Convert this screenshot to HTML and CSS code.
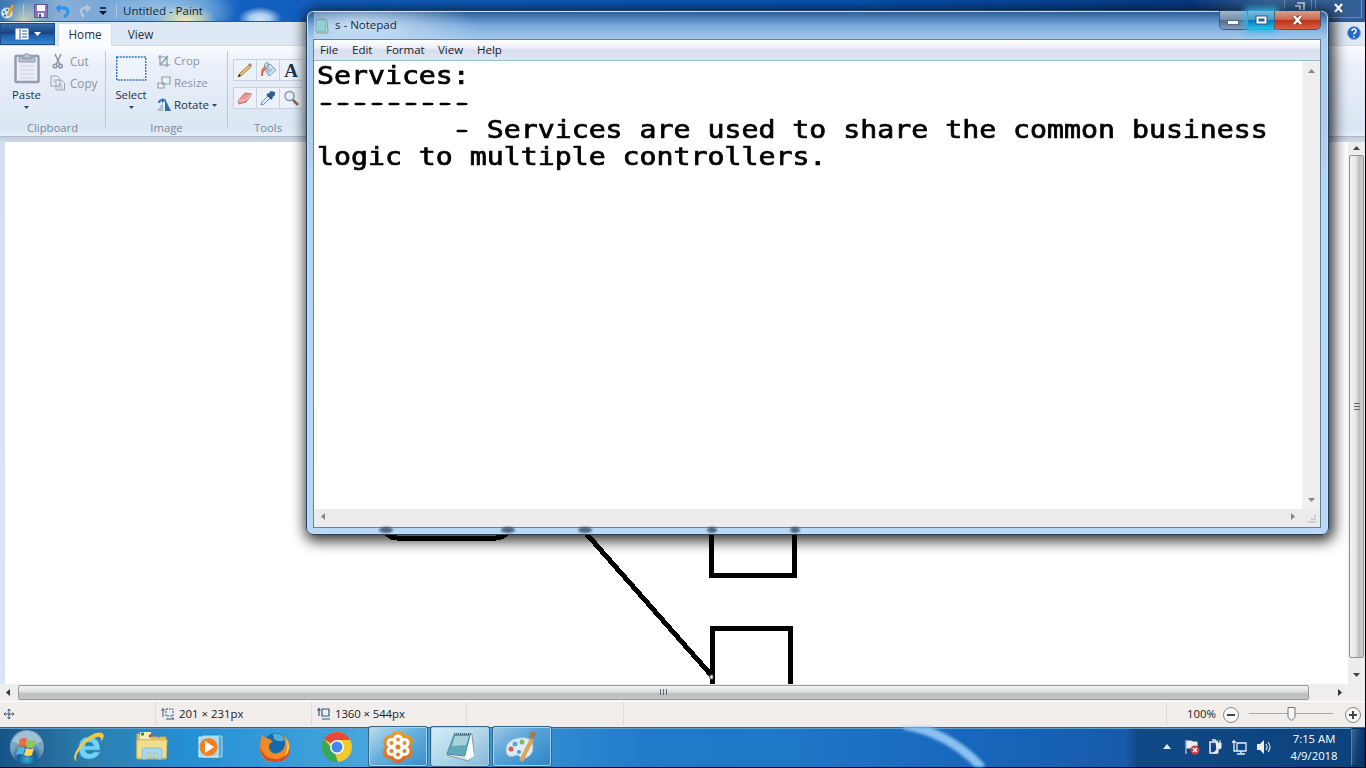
FILE: index.html
```html
<!DOCTYPE html>
<html lang="en">
<head>
<meta charset="utf-8">
<title>Untitled - Paint</title>
<link rel="stylesheet" href="styles.css">
</head>
<body>
<main class="desktop">
  <section class="paint">
    <header class="paint-title">
      <svg class="title-icon" width="16" height="18" viewBox="0 0 16 18"><ellipse cx="7" cy="11" rx="6" ry="5.500" fill="#dcebf2" stroke="#7fa3bd"/><circle cx="4" cy="10" r="1.300" fill="#3c8ed0"/><circle cx="7" cy="8" r="1.300" fill="#41a24a"/><circle cx="5" cy="13.500" r="1.200" fill="#2d73c8"/><path d="M8 14L13 3" stroke="#e49a36" stroke-width="3"/></svg>
      <i class="tsep"></i>
      <svg class="save" width="14" height="14" viewBox="0 0 14 14"><path d="M.5.5h13v13H.5z" fill="#8a76b5" stroke="#665496"/><path d="M3 1h8v6H3z" fill="#f5f5ff"/><path d="M4 9h6v4H4z" fill="#e8ebf8"/><path d="M5 10h2v3H5z" fill="#4b4b86"/></svg>
      <svg class="undo" width="15" height="14" viewBox="0 0 15 14"><path d="M3 4h6q4 0 4 4-.5 3-4 5" fill="none" stroke="#2b95ef" stroke-width="3"/><path d="M0 4l5-4v9z" fill="#2b95ef"/></svg>
      <svg class="redo" width="14" height="14" viewBox="0 0 14 14"><path d="M11 4H6Q2 5 3 8q1 3 3 5" fill="none" stroke="#b4c6d8" stroke-width="2.500"/><path d="M13 4L8 0v9z" fill="#b4c6d8"/></svg>
      <svg class="qat" width="8" height="8" viewBox="0 0 8 8"><path d="M1 1h6" stroke="#0b1526" stroke-width="1.500"/><path d="M0 4h8L4 8z" fill="#0b1526"/></svg>
      <i class="tsep tsep2"></i>
      <span class="paint-name">Untitled - Paint</span>
      <div class="paint-buttons"><i></i><i></i><i class="prestore"><svg width="11" height="10" viewBox="0 0 11 10"><path d="M3 2h7v7H8M1 5h5v4" fill="none" stroke="#dce6f1" stroke-width="1.700"/></svg></i><i class="pclose"><svg width="12" height="10" viewBox="0 0 12 10"><path d="M2 1l7 8M9 1L2 9" stroke="#344b69" stroke-width="4"/><path d="M2 1l7 8M9 1L2 9" stroke="#fff" stroke-width="2.400"/></svg></i></div>
    </header>
    <nav class="tabs">
      <div class="file-tab"><svg width="28" height="12" viewBox="0 0 28 12"><path d="M.5.5h13v11H.5z" fill="#fff"/><path d="M5 1v10M7 3h5M7 6h5M7 9h5" stroke="#31568c"/><path d="M19 4h7l-3.500 4z" fill="#fff"/></svg></div>
      <div class="home-tab">Home</div><div class="view-tab">View</div>
      <svg class="help" width="14" height="14" viewBox="0 0 14 14"><circle cx="7" cy="7" r="6.500" fill="#2466cb" stroke="#8aa9d6"/><path d="M5 5q0-2 2-2t2 2q0 1-1 1.700T7 8.500M7 10v1.500" fill="none" stroke="#fff" stroke-width="1.500"/></svg>
    </nav>
    <div class="ribbon">
      <div class="group clipboard">
        <div class="group-main">
          <div class="big paste"><svg width="26" height="32" viewBox="0 0 26 32"><rect x="1.500" y="4" width="23" height="26" rx="1" fill="#e9edf5" stroke="#939dad" stroke-width="2.500"/><path d="M5 6h16v4H5zM9 3h2q0-3 4 0h2v4H9z" fill="#bcc4d0" stroke="#9099a7"/><path d="M6 14h14M6 18h14M6 22h14M6 26h14" stroke="#ccd3df"/></svg><b>Paste</b><svg class="arrow" width="5" height="3" viewBox="0 0 5 3"><path d="M0 0h5L2.500 3z" fill="#34435a"/></svg></div>
          <div class="small-list"><div><svg width="16" height="16" viewBox="0 0 16 16"><path d="M5 1l5 11M11 1L6 12" stroke="#8c95a5" stroke-width="1.500"/><circle cx="5" cy="13" r="1.800" fill="none" stroke="#8c95a5" stroke-width="1.500"/><circle cx="10.500" cy="13" r="1.800" fill="none" stroke="#8c95a5" stroke-width="1.500"/></svg>Cut</div><div><svg width="16" height="16" viewBox="0 0 16 16"><path d="M1 1h6l3 3v7H1zM6 5h5l3.500 3v7H6z" fill="#edf1f7" stroke="#9ca5b4"/><path d="M3 5h4M3 7h2M8 9h4M8 11h5M8 13h5" stroke="#adb5c1"/></svg>Copy</div></div>
        </div><div class="caption">Clipboard</div>
      </div>
      <div class="group image">
        <div class="group-main">
          <div class="big select"><svg width="31" height="32" viewBox="0 0 31 32"><rect x=".7" y="6" width="29" height="23" fill="#edf4fc" stroke="#3973b8" stroke-width="1.400" stroke-dasharray="2 1"/></svg><b>Select</b><svg class="arrow" width="5" height="3" viewBox="0 0 5 3"><path d="M0 0h5L2.500 3z" fill="#34435a"/></svg></div>
          <div class="small-list"><div><svg width="14" height="14" viewBox="0 0 14 14"><path d="M3 1v10h10M1 3h9v10M4 10l7-8" fill="none" stroke="#8994a6" stroke-width="1.200"/></svg>Crop</div><div><svg width="14" height="14" viewBox="0 0 14 14"><path d="M5 1h8v7H5zM1 7h6v5H1z" fill="#edf1f7" stroke="#929dae" stroke-width="1.200"/></svg>Resize</div><div class="rotate"><svg width="14" height="14" viewBox="0 0 14 14"><path d="M8 1v12h6z" fill="#2a6eae"/><path d="M6 5v8H0z" fill="#a9bdcf"/><path d="M2 5q0-3 4-3" fill="none" stroke="#2673b8" stroke-width="2"/><path d="M5 0l4 2-4 3z" fill="#2673b8"/></svg>Rotate<svg width="5" height="3" viewBox="0 0 5 3"><path d="M0 0h5L2.500 3z" fill="#34435a"/></svg></div></div>
        </div><div class="caption">Image</div>
      </div>
      <div class="group tools">
        <div class="tool-grid">
          <i><svg width="18" height="18" viewBox="0 0 18 18"><path d="M2 16l2-4 9-8 2 2-9 8z" fill="#edc364" stroke="#8a6940" stroke-width=".8"/><path d="M12 4l2-2 2 2-1 2z" fill="#bb8272"/><path d="M2 16l1-3 2 2z" fill="#222"/></svg></i>
          <i><svg width="18" height="18" viewBox="0 0 18 18"><path d="M5 7l6-4 6 6-7 6z" fill="#dceaf5" stroke="#7898b6"/><path d="M9 8V2q-3-2-4 5" fill="none" stroke="#668bae"/><path d="M2 15q-1-8 4-9l3 2q-5 0-5 7z" fill="#e66e4b"/><path d="M6 8l9-1-5 6z" fill="#a2c4df"/></svg></i>
          <i class="letter">A</i>
          <i><svg width="18" height="18" viewBox="0 0 18 18"><path d="M2 12l7-8 7 1-6 8-7 2z" fill="#ed9590" stroke="#b97777"/><path d="M2 12l7-1 7-6" fill="none" stroke="#ffd1c7"/></svg></i>
          <i><svg width="18" height="18" viewBox="0 0 18 18"><path d="M2 16l1-3 7-7 2 2-7 7z" fill="#e5f2fa" stroke="#6d8ca7"/><path d="M9 5l3-3 4 1 0 3-3 3z" fill="#345f91"/><path d="M8 5l5 5" stroke="#25507f" stroke-width="2"/></svg></i>
          <i><svg width="18" height="18" viewBox="0 0 18 18"><circle cx="7.500" cy="7" r="4.500" fill="#e7f0f8" stroke="#8695a6" stroke-width="1.500"/><path d="M11 11l5 5" stroke="#85675b" stroke-width="2.500"/></svg></i>
        </div><div class="caption">Tools</div>
      </div>
    </div>
    <div class="work">
      <svg class="drawing" width="1343" height="542" viewBox="5 142 1343 542"><path d="M381 520q4 18 16 18h99q12 0 17-18M576 522L712 676M711 520v55h83v-55M712 684v-56h78v56" fill="none" stroke="#000" stroke-width="5" shape-rendering="crispEdges"/><path d="M710 675h3v4h-3z" fill="#fff" stroke="#555"/></svg>
      <div class="vbar"><svg width="7" height="4" viewBox="0 0 7 4"><path d="M0 4l3.500-4L7 4z" fill="#444"/></svg><div class="vthumb"><i></i><i></i><i></i></div><svg width="7" height="4" viewBox="0 0 7 4"><path d="M0 0h7L3.500 4z" fill="#444"/></svg></div>
    </div>
    <div class="hbar"><svg width="4" height="7" viewBox="0 0 4 7"><path d="M4 0v7L0 3.500z" fill="#333"/></svg><div class="hthumb"><i></i><i></i><i></i></div><svg width="4" height="7" viewBox="0 0 4 7"><path d="M0 0v7l4-3.500z" fill="#333"/></svg></div>
    <footer class="status">
      <div class="cell c1"><svg width="12" height="12" viewBox="0 0 12 12"><path d="M6 1v10M1 6h10M4.500 2.500L6 1l1.500 1.500M4.500 9.500L6 11l1.500-1.500M2.500 4.500L1 6l1.500 1.500M9.500 4.500L11 6 9.500 7.500" fill="none" stroke="#36516f"/></svg></div>
      <div class="cell c2"><svg width="14" height="13" viewBox="0 0 14 13"><path d="M2 2v8M.5 3.500L2 1.500l1.500 2M5 12h8M11 10.500l2 1.500" fill="none" stroke="#34577d"/><path d="M5 2h7v7H5z" fill="none" stroke="#34577d" stroke-dasharray="2 1"/></svg><span>201 × 231px</span></div>
      <div class="cell c3"><svg width="14" height="13" viewBox="0 0 14 13"><path d="M2 2v7M.5 3.500L2 1.500l1.500 2M5 12h8M5 2h7v7H5z" fill="none" stroke="#34577d" stroke-width="1.200"/></svg><span>1360 × 544px</span></div>
      <div class="cell c4"></div><div class="cell c5"></div>
      <div class="zoom"><span>100%</span><svg width="141" height="18" viewBox="0 0 141 18"><circle cx="9" cy="10" r="7.500" fill="#f9f9f9" stroke="#85888c"/><circle cx="131" cy="10" r="7.500" fill="#f9f9f9" stroke="#85888c"/><path d="M5 10h8M127 10h8M131 6v8" stroke="#444" stroke-width="2"/><path d="M27 8.500h84" stroke="#aaa"/><path d="M66 2.500h7v10l-3.500 3-3.500-3z" fill="#f8f8f8" stroke="#777"/></svg></div>
    </footer>
  </section>

  <footer class="taskbar">
    <svg class="sweep" width="1365" height="40" viewBox="0 0 1365 40"><path d="M904 -2Q950 6 982 41" fill="none" stroke="#8ac1f2" stroke-width="9"/></svg>
    <div class="task start"><svg width="38" height="38" viewBox="0 0 38 38"><defs><radialGradient id="orb" cy=".85"><stop stop-color="#39a9d9"/><stop offset=".5" stop-color="#175b91"/><stop offset="1" stop-color="#78a6c5"/></radialGradient></defs><circle cx="19" cy="19" r="17.500" fill="url(#orb)" stroke="#235a83"/><path d="M4 13q6-10 15-10t15 10q-15 8-30 0z" fill="#fff" opacity=".3"/><path d="M12 11q4-2 7 0l-2 8q-4-2-7 0z" fill="#f26b36"/><path d="M20 12q4 2 8 0l-2 7q-4 2-8 0z" fill="#91c84b"/><path d="M10 20q4-2 7 0l-2 7q-3-2-7 0z" fill="#53b5f0"/><path d="M18 20q4 2 8 0l-2 7q-4 2-8 0z" fill="#ffd354"/></svg></div>
    <div class="task ie"><svg width="34" height="34" viewBox="0 0 34 34"><path d="M28 22q-3 7-11 7-10 0-10-11Q7 7 17 7q11 0 11 13H13q1 4 5 4 3 0 4-2zM13 16h9q-1-4-5-4t-4 4z" fill="#75d2f8" stroke="#3aa3d8" stroke-width=".7"/><path d="M5 31Q-2 29 8 15 22 0 30 3q4 2-1 9 1-6-4-5Q13 10 5 24q-2 5 0 7z" fill="#f5c93c"/></svg></div>
    <div class="task folder"><svg width="34" height="32" viewBox="0 0 34 32"><path d="M2 3h10l2 3h17v22H2z" fill="#dfc166" stroke="#c8a951"/><path d="M5 1h11v7H5z" fill="#f4edc2"/><path d="M2 9h30l-1 18H2z" fill="#f2dd8b" stroke="#dabe64"/><path d="M7 28V19q0-2 2-2h16q2 0 2 2v9h-5v-6h-3v5h-4v-5h-3v6z" fill="#a9d7eb" stroke="#8bc2d8"/><path d="M6 3h3" stroke="#278e55" stroke-width="3"/><path d="M14 5h2" stroke="#c33f2d" stroke-width="3"/><path d="M23 6h2" stroke="#4a9bcc" stroke-width="2"/></svg></div>
    <div class="task media"><svg width="26" height="28" viewBox="0 0 26 28"><path d="M5 3h19v21H5z" fill="#5aaad9" stroke="#a6d8ef"/><path d="M1 4h19v20H1z" fill="#acd4e8" stroke="#d8eef7"/><circle cx="10.500" cy="14" r="9" fill="#ee8122"/><path d="M7 8l9 6-9 6z" fill="#fff"/></svg></div>
    <div class="task firefox"><svg width="34" height="34" viewBox="0 0 34 34"><circle cx="18" cy="15" r="12" fill="#1769ad"/><path d="M15 4q9-2 12 6-6 3-11-1z" fill="#52add8"/><path d="M4 5q4 4 8 4l3 3q-5 1-4 6 2 7 9 5 8-2 7-13l-2-5q8 6 7 15-2 12-15 12Q2 32 2 18q0-7 2-13z" fill="#f28a24"/><path d="M2 17q5 13 17 12 9-1 13-12 0 15-15 15Q3 32 2 17z" fill="#d94c24"/><path d="M28 8q7 12-2 19 5-7 2-19z" fill="#ffd84b"/></svg></div>
    <div class="task chrome"><svg width="32" height="32" viewBox="0 0 32 32"><circle cx="16" cy="16" r="15" fill="#f5c92e"/><path d="M16 16L3 8Q8 1 16 1q9 0 13 8H16z" fill="#e5483d"/><path d="M3 8l10 12 4 11Q8 32 3 24-2 16 3 8z" fill="#36a858"/><circle cx="16" cy="16" r="7" fill="#fff"/><circle cx="16" cy="16" r="5.500" fill="#4686ec"/></svg></div>
    <div class="task app meeting"><svg width="32" height="32" viewBox="0 0 32 32"><defs><linearGradient id="petal" x2="0" y2="1" gradientUnits="objectBoundingBox"><stop stop-color="#e5a22f"/><stop offset="1" stop-color="#d96827"/></linearGradient></defs><path d="M16 0q5 0 7 4 8 0 8 7-1 3-2 5 3 4 1 8-2 4-7 4-3 4-7 4t-7-4q-6 0-8-4-1-5 2-8-3-4-1-8 2-4 7-4 2-4 7-4z" fill="url(#petal)"/><g fill="none" stroke="#fff" stroke-width="3"><circle cx="16" cy="8.500" r="3.500"/><circle cx="22.500" cy="12" r="3.500"/><circle cx="22.500" cy="20" r="3.500"/><circle cx="16" cy="23.500" r="3.500"/><circle cx="9.500" cy="20" r="3.500"/><circle cx="9.500" cy="12" r="3.500"/></g><circle cx="16" cy="16" r="3.500" fill="#dc8028" stroke="#fff" stroke-width="2"/></svg></div>
    <div class="task app note"><svg width="34" height="32" viewBox="0 0 34 32"><path d="M12 3h17l2 21-6 6L4 24z" fill="#dde4e2" stroke="#819ba5"/><path d="M11 4h16l-5 21-18-2z" fill="#64a9ba" stroke="#4a8ca2"/><path d="M12 5h14l-3 9-14 1z" fill="#a8d3da"/><path d="M28 4l3 21-6 4-3-3z" fill="#fff"/><path d="M11 3h17" stroke="#496d7c" stroke-width="2" stroke-dasharray="1 1"/></svg></div>
    <div class="task app palette"><svg width="34" height="34" viewBox="0 0 34 34"><path d="M14 8Q1 10 1 20q0 8 8 6 4-3 8 3 11-2 11-12 0-11-14-9z" fill="#deedf5" stroke="#a8c5da"/><circle cx="6" cy="19" r="2.500" fill="#e05a43"/><circle cx="10" cy="14" r="2.500" fill="#55a6de"/><circle cx="17" cy="12" r="2.500" fill="#83b760"/><circle cx="14" cy="22" r="2" fill="#4d9bcf"/><path d="M16 31L27 9" stroke="#dfa558" stroke-width="4"/><path d="M24 7l2-6 6 2-4 6z" fill="#a27b52"/></svg></div>
    <div class="tray">
      <svg width="8" height="6" viewBox="0 0 8 6"><path d="M0 5l4-5 4 5z" fill="#e7edf5"/></svg>
      <svg width="16" height="16" viewBox="0 0 16 16"><path d="M2 1v14M3 2h4l2 1h4v7H9L7 9H3z" fill="#eee" stroke="#eee"/><circle cx="11" cy="11" r="4.500" fill="#d33b3e"/><path d="M9 9l4 4M13 9l-4 4" stroke="#fff" stroke-width="1.500"/></svg>
      <svg width="16" height="16" viewBox="0 0 16 16"><path d="M2 3h7v11H2zM4 1h3v2" fill="none" stroke="#eee" stroke-width="1.500"/><path d="M8 4h5v5q-2 2-4 0zM9 1v3M12 1v3M10 9v5H5" fill="#eee" stroke="#eee"/></svg>
      <svg width="16" height="16" viewBox="0 0 16 16"><path d="M5 4h9v8H5zM9 12v3M5 15h8M2 1v6M0 3h4M2 7v5h3" fill="none" stroke="#eee" stroke-width="1.300"/></svg>
      <svg width="16" height="16" viewBox="0 0 16 16"><path d="M1 5h3l4-4v14l-4-4H1z" fill="#eee"/><path d="M10 5q2 3 0 6M12 3q4 5 0 10" fill="none" stroke="#ddd" stroke-width="1.200"/></svg>
      <div class="clock"><span>7:15 AM</span><span>4/9/2018</span></div><i class="show-desktop"></i>
    </div>
  </footer>

  <section class="notepad">
    <header class="note-title"><svg width="14" height="16" viewBox="0 0 14 16"><path d="M1 2h11l1 13H2z" fill="#e3eddf" stroke="#929b91"/><path d="M1 2h10v12H1z" fill="#8fd0d7" stroke="#79adb4"/><path d="M1 1h10" stroke="#6c8790" stroke-dasharray="1 1"/></svg><span>s - Notepad</span>
      <div class="window-buttons"><i class="min"><svg width="13" height="6"><rect x=".5" y=".5" width="11" height="4" fill="#fff" stroke="#546b85"/></svg></i><i class="max"><svg width="13" height="11"><rect x="1" y="1" width="11" height="8" fill="#fff" stroke="#26587d"/><rect x="4" y="4" width="5" height="2" fill="#3687b3" stroke="#26587d"/></svg></i><i class="close"><svg width="12" height="10" viewBox="0 0 12 10"><path d="M2 1l7 8M9 1L2 9" stroke="#783a30" stroke-width="4"/><path d="M2 1l7 8M9 1L2 9" stroke="#fff" stroke-width="2.400"/></svg></i></div>
    </header>
    <div class="client">
      <nav class="note-menu"><span>File</span><span>Edit</span><span>Format</span><span>View</span><span>Help</span></nav>
      <div class="editor"><div class="document"><div>Services:</div><div class="rule">---------</div><div class="point"><span class="rule">-</span><span>Services are used to share the common business</span></div><div>logic to multiple controllers.</div></div><div class="note-v"><svg width="7" height="4" viewBox="0 0 7 4"><path d="M0 4l3.500-4L7 4z" fill="#888"/></svg><svg width="7" height="4" viewBox="0 0 7 4"><path d="M0 0h7L3.500 4z" fill="#888"/></svg></div></div>
      <div class="note-h"><svg width="4" height="7" viewBox="0 0 4 7"><path d="M4 0v7L0 3.500z" fill="#888"/></svg><svg class="right" width="4" height="7" viewBox="0 0 4 7"><path d="M0 0v7l4-3.500z" fill="#888"/></svg><svg class="grip" width="10" height="10" viewBox="0 0 10 10"><path d="M7 1h2M4 4h2M7 4h2M1 7h2M4 7h2M7 7h2" stroke="#b9b9b9" stroke-width="1.500"/></svg></div>
    </div>
    <svg class="glass" width="480" height="7" viewBox="366 527 480 7"><g fill="#1e344d" opacity=".7"><ellipse cx="386" cy="530" rx="7" ry="3"/><ellipse cx="508" cy="530" rx="7" ry="3"/><ellipse cx="585" cy="530" rx="7" ry="3"/><ellipse cx="712" cy="530" rx="5" ry="3"/><ellipse cx="795" cy="530" rx="5" ry="3"/></g></svg>
  </section>
</main>
</body>
</html>
```
FILE: styles.css
```css
* { box-sizing: border-box; }
body { margin: 0; background: #000; font: 11px "Open Sans", "Noto Sans", sans-serif; color: #233047; }
svg { display: block; flex: none; }
i { font-style: normal; }
b { font-weight: 400; }
.desktop { position: relative; width: 1366px; height: 768px; overflow: hidden; }
.paint { width: 1365px; height: 727px; display: flex; flex-direction: column; background: #dce6f3; }

.paint-title { height: 22px; display: flex; align-items: center; background: radial-gradient(ellipse 30px 15px at 186px 20px, rgba(238,235,187,.95) 0, rgba(231,228,174,.6) 50%, transparent), radial-gradient(ellipse 75px 26px at 160px 11px, rgba(160,200,232,.9) 0, rgba(130,179,222,.75) 55%, transparent), radial-gradient(ellipse 22px 12px at 260px 19px, #d2e6f5 0, #abcdef 45%, transparent), radial-gradient(circle at 25px 22px, #cbd5bd, transparent 22px), linear-gradient(90deg, #3b76b4 0, #8bb0d4 60px, #7ca8d6 95px, #4d8fd5 200px, #1460c0 240px, #0754b3 850px, #073b86 1190px, #3a6599 1270px, #315e94); border-bottom: 1px solid #315887; }
.tsep { width: 1px; height: 14px; background: #b5c5d2; margin-left: 7px; }
.save { margin-left: 10px; }
.undo { margin-left: 7px; }
.redo { margin-left: 8px; }
.qat { margin-left: 7px; }
.tsep2 { margin-left: 9px; }
.paint-name { margin-left: 6px; color: #111f35; font-size: 11.500px; }
.paint-buttons { margin-left: auto; display: flex; align-self: stretch; width: 107px; }
.paint-buttons i { height: 18px; width: 27px; flex: none; border-right: 1px solid #7897b9; border-bottom: 1px solid #6789b0; padding: 3px 0 0 7px; }
.paint-buttons .prestore { width: 25px; padding: 1px 0 0 3px; margin-left: -21px; }
.paint-buttons .pclose { width: 46px; padding-left: 17px; }

.tabs { height: 24px; display: flex; background: #dfe8f5; align-items: stretch; font-size: 11.700px; border-bottom: 1px solid #d0d9e6; }
.file-tab { width: 55px; margin-top: 1px; background: linear-gradient(#376ba8, #164580 48%, #1b58a5 50%, #3588d0); border: 1px solid #204f87; padding: 4px 0 0 14px; }
.home-tab { width: 54px; margin: 1px 0 -1px 3px; background: #fafcff; border: 1px solid #d3deec; border-bottom: 0; border-radius: 2px 2px 0 0; text-align: center; line-height: 21px; }
.view-tab { width: 57px; text-align: center; line-height: 25px; }
.help { margin: 4px 4px 0 auto; }
.ribbon { height: 91px; display: flex; background: linear-gradient(#fafcff, #eaf0f9 20%, #dbe6f4 90%, #e5eef8); border-bottom: 1px solid #afbac9; }
.group { display: flex; flex-direction: column; border-right: 1px solid #bdc7d5; height: 78px; margin-top: 5px; }
.clipboard { width: 106px; }
.image { width: 122px; }
.tools { width: 80px; border: 0; }
.group-main { display: flex; height: 70px; flex: none; }
.big { display: flex; flex-direction: column; align-items: center; height: 62px; }
.big b { height: 16px; line-height: 16px; margin-top: 3px; font-size: 11.300px; }
.arrow { margin-top: 4px; }
.paste { margin-left: 12px; width: 29px; }
.paste svg:first-child { margin-top: 1px; }
.paste b { margin-top: 3px; }
.paste .arrow { margin-top: 3px; }
.select { margin-left: 8px; width: 34px; }
.select b { margin-top: 4px; }
.select .arrow { margin-top: 3px; }
.small-list { color: #8b94a3; margin: -1px 0 0 10px; font-size: 11.700px; }
.small-list > div { height: 22px; display: flex; align-items: center; gap: 3px; line-height: 20px; }
.image .small-list { margin-left: 9px; font-size: 11.500px; }
.clipboard .small-list { margin-left: 9px; }
.clipboard .small-list > div { gap: 4px; }
.small-list .rotate { color: #25334a; white-space: nowrap; }
.caption { flex: none; text-align: center; color: #79869c; font-size: 11.300px; height: 14px; line-height: 14px; }
.tool-grid { display: grid; flex: none; grid-template-columns: repeat(3, 23px); grid-template-rows: 22px 22px; row-gap: 6px; margin: 8px 0 0 5px; height: 62px; align-content: start; }
.tool-grid i { border: 1px solid #c7d1df; border-right: 0; display: grid; place-items: center; background: #edf2fa; }
.tool-grid .letter { font: bold 19px "Liberation Serif", serif; color: #1c3553; }

.work { height: 547px; padding: 5px 0 0 5px; background: linear-gradient(#c2cede, #d5e0ef 8px, #dce7f6); display: flex; }
.work > .drawing { background: #fff; }
.vbar { width: 17px; height: 542px; padding-top: 4px; display: flex; flex-direction: column; align-items: center; background: #ededed; }
.vthumb { height: 503px; flex: none; margin-top: 5px; width: 15px; background: linear-gradient(90deg, #f5f5f5, #e5e5e5 45%, #babdc1 70%, #d3d3d3); border: 1px solid #909398; border-radius: 2px; display: flex; flex-direction: column; align-items: center; justify-content: center; gap: 2px; }
.vthumb i { width: 6px; height: 1px; background: #65686b; }
.vbar > svg:last-child { margin-top: 15px; }
.hbar { height: 17px; background: #eee; display: flex; align-items: center; padding-left: 6px; }
.hthumb { width: 1291px; height: 15px; margin: 0 29px 0 8px; background: linear-gradient(#f4f4f4, #dedede 45%, #bbbdbf 60%, #c6c6c6); border: 1px solid #999; border-radius: 2px; display: flex; justify-content: center; padding-top: 3px; gap: 2px; }
.hthumb i { width: 1px; height: 6px; background: #65686b; }
.status { height: 26px; display: flex; background: #f0edeb; border-top: 1px solid #fff; font-size: 11.400px; color: #222; padding-bottom: 2px; }
.cell { flex: none; border-right: 1px solid #dddada; display: flex; align-items: center; }
.c1 { width: 156px; padding-left: 3px; }
.c2 { width: 156px; padding-left: 5px; gap: 4px; }
.c3 { width: 155px; padding-left: 5px; gap: 4px; letter-spacing: -.1px; }
.c4 { width: 157px; }
.c5 { width: 543px; }
.zoom { margin-left: 20px; display: flex; align-items: center; gap: 5px; }
.zoom span { width: 30px; white-space: nowrap; }

.taskbar { position: relative; width: 1365px; height: 40px; display: flex; background: linear-gradient(90deg, #145586 0, #2d7fae 90px, #2590d5 190px, #45a5dc 360px, #3994d4 500px, #2179c9 650px, #1f77c8 790px, #1767bd 970px, #175baa 1125px, #104985 1138px, #0c427c 1365px); box-shadow: inset 0 1px #34678f, inset 0 2px #629cc7; }
.sweep { position: absolute; left: 0; top: 0; filter: blur(1.500px); }
.task { position: relative; flex: none; width: 62px; height: 40px; display: grid; place-items: center; }
.start { width: 55px; }
.start svg { margin-left: -1px; }
.ie { width: 67px; }
.folder { width: 59px; }
.media { width: 60px; }
.firefox { width: 67px; }
.chrome { width: 58px; }
.app { width: 59px; height: 39px; border: 1px solid #a3d3ed; border-radius: 2px; box-shadow: 0 0 0 1px #33688c; background: linear-gradient(145deg, #b9dced, #68b1dd 45%, #398fc9); }
.meeting { margin-left: 3px; width: 58px; }
.note { background: linear-gradient(145deg, #d4edf7, #b2d7e9 50%, #86b9d6); margin-left: 4px; width: 58px; }
.palette { width: 58px; margin-left: 4px; background: linear-gradient(145deg, #9ac7e3, #54a2d7 45%, #3186c6); }
.tray { position: relative; margin-left: auto; display: flex; align-items: center; color: #fff; }
.tray svg { margin-right: 8px; }
.tray > svg:first-child { margin-right: 13px; }
.clock { width: 60px; height: 36px; margin: 1px 7px 0 4px; font-size: 11.300px; line-height: 17px; display: flex; flex-direction: column; align-items: center; white-space: nowrap; }
.show-desktop { width: 14px; height: 38px; border: 1px solid #082c5b; border-left-color: #5682af; background: linear-gradient(100deg, #396794, #104076 50%, #073163); }

.notepad { position: absolute; left: 306px; top: 10px; width: 1023px; height: 525px; border: 1px solid #263f5b; border-radius: 7px; background: linear-gradient(#255999 0, #7caadb 15px, #a7cbef 29px, #b2cee9 145px, #b3d6f8 160px, #b9d8f6); box-shadow: inset 0 0 0 1px #c8def3, 2px 3px 14px 3px rgba(0,0,0,.8); padding: 0 7px 7px; }
.note-title { height: 28px; display: flex; align-items: center; font-size: 11.500px; color: #152a44; background: radial-gradient(ellipse 120px 30px at 45px 15px, rgba(218,234,248,.85), transparent); }
.note-title > svg { margin: 1px 0 0 1px; }
.note-title > span { margin: -1px 0 0 6px; }
.window-buttons { margin-left: auto; align-self: flex-start; height: 19px; display: flex; border: 1px solid #3f5676; border-top: 0; border-radius: 0 0 5px 5px; }
.window-buttons i { width: 28px; display: grid; place-items: center; background: linear-gradient(#a3b7cf, #758eab 48%, #4c6d91 50%, #829bb8); border-right: 1px solid #465d79; border-radius: 0 0 0 4px; }
.window-buttons .min { padding-top: 5px; }
.window-buttons .max { width: 27px; background: linear-gradient(#7bbbe1, #4a99ca 48%, #0775b3 50%, #20c4e8); box-shadow: 0 0 7px 3px #35baf0; border-radius: 0; }
.window-buttons .close { width: 45px; border: 0; background: linear-gradient(#d9a08b, #cc664d 48%, #bd3014 50%, #d76041); border-radius: 0 0 4px; }
.client { height: 489px; margin-left: -1px; border: 1px solid #67829d; background: #fff; display: flex; flex-direction: column; }
.note-menu { height: 21px; flex: none; background: linear-gradient(#fff, #eceff8 40%, #d8deef 50%, #e1e5f3); border-bottom: 1px solid #9ab9d3; display: flex; padding-left: 6px; font-size: 11.500px; line-height: 20px; color: #222; }
.note-menu span:nth-child(1) { width: 32px; }
.note-menu span:nth-child(2) { width: 34px; }
.note-menu span:nth-child(3) { width: 52px; }
.note-menu span:nth-child(4) { width: 39px; }
.editor { height: 448px; flex: none; display: flex; justify-content: space-between; }
.document { width: 840px; margin: 2px 0 0 3px; font: 24px/27px "DejaVu Sans Mono", "Liberation Mono", monospace; color: #000; transform: scaleX(1.175); transform-origin: left top; -webkit-text-stroke: .7px #000; white-space: nowrap; }
.rule { text-shadow: 2px 0 #000, -1px 0 #000; }
.point { display: flex; gap: 1ch; padding-left: 8ch; }
.note-v { width: 18px; display: flex; flex-direction: column; align-items: center; justify-content: space-between; background: #efefef; padding: 8px 0 7px; }
.note-h { height: 18px; background: #ececec; display: flex; align-items: center; padding: 0 0 3px 7px; }
.right { margin-left: auto; margin-right: 12px; }
.grip { margin: 7px 3px 0 0; }
.glass { position: absolute; left: 59px; bottom: 0; filter: blur(1.200px); }
```
